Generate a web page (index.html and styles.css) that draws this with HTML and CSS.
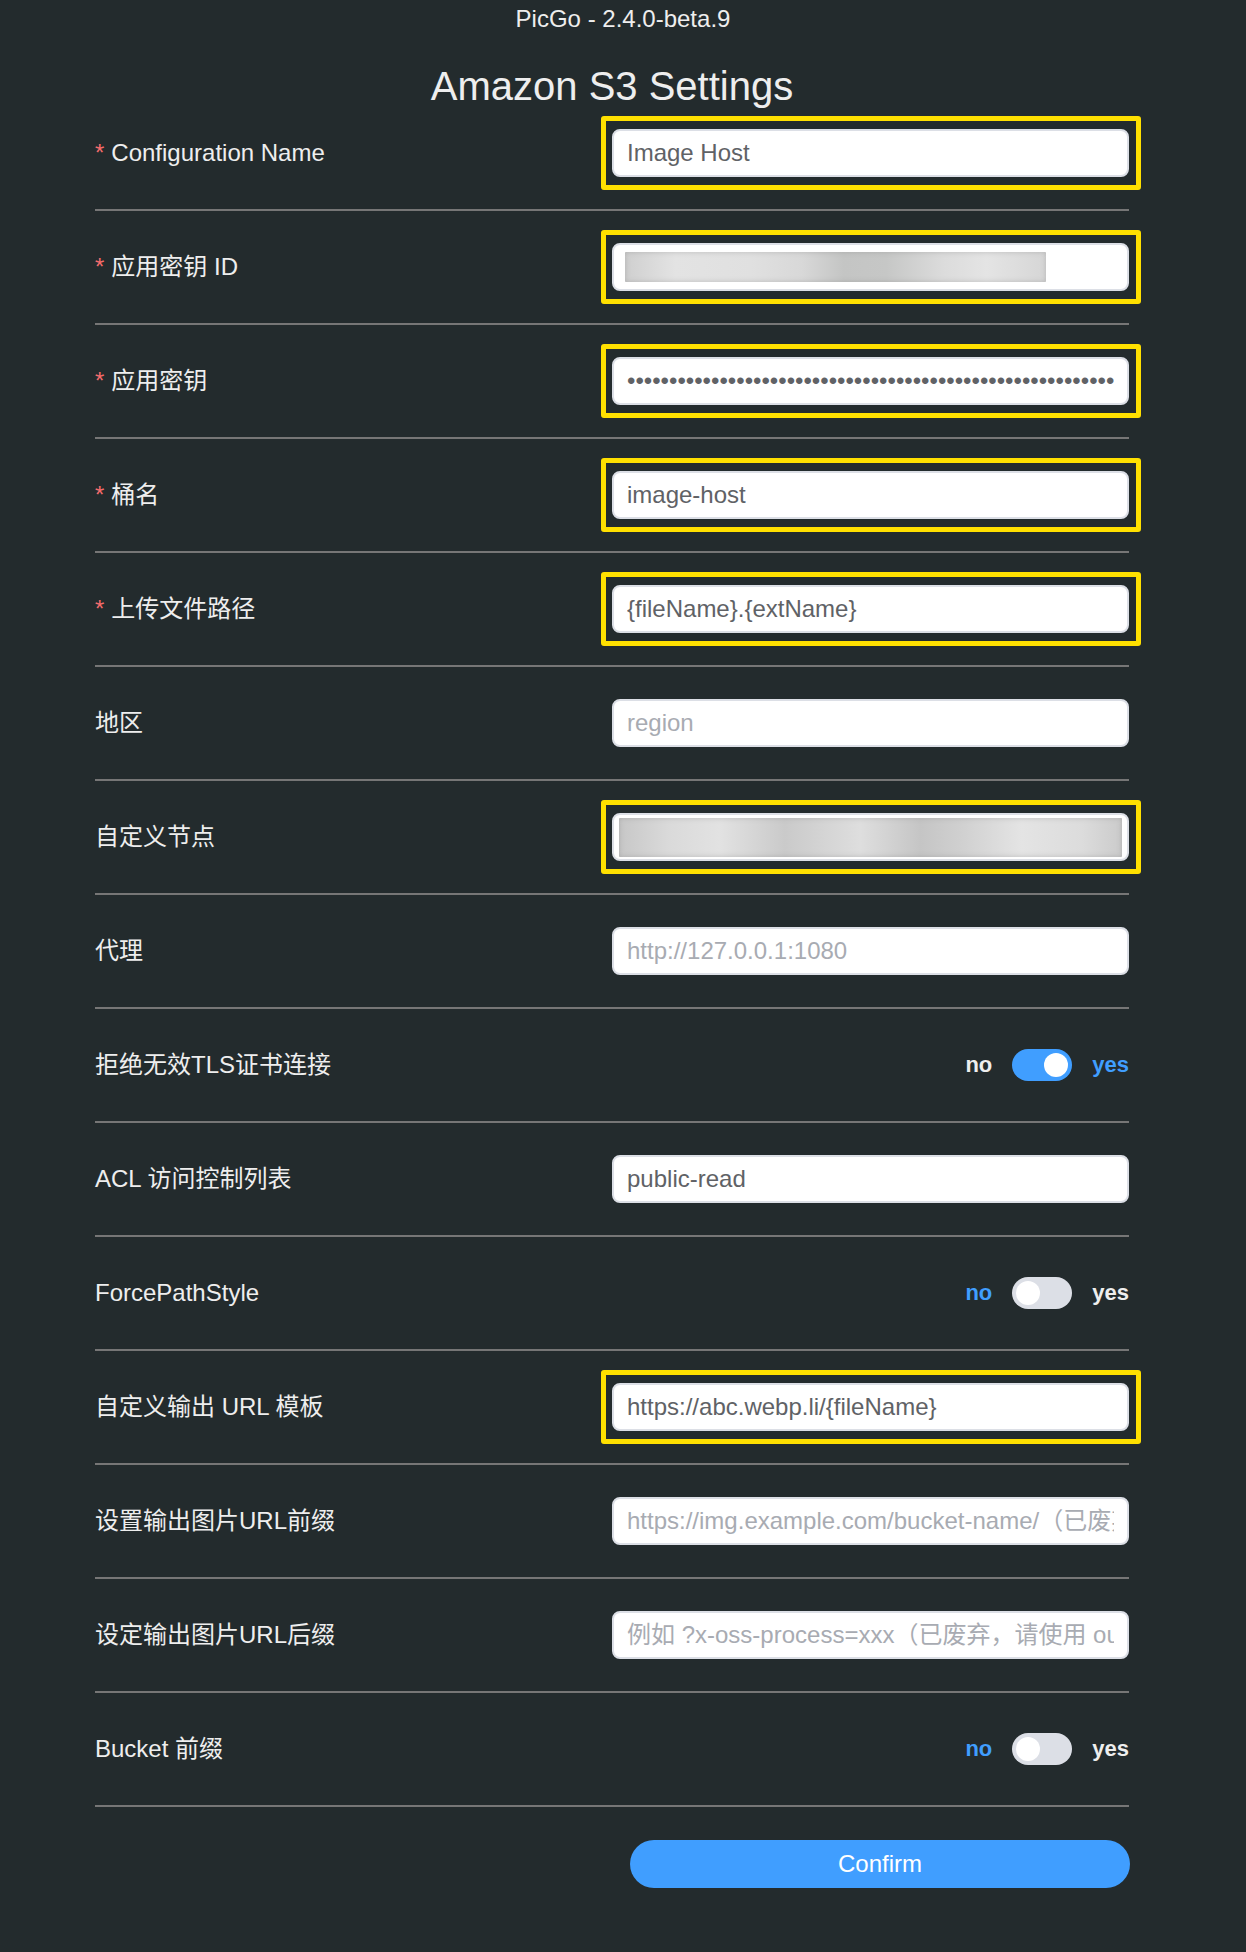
FILE: index.html
```html
<!DOCTYPE html>
<html lang="zh-CN">
<head>
<meta charset="utf-8">
<title>PicGo - Amazon S3 Settings</title>
<link rel="stylesheet" href="styles.css">
</head>
<body>
<div class="titlebar">PicGo - 2.4.0-beta.9</div>
<main class="main">
  <h1 class="page-title">Amazon S3 Settings</h1>
  <form class="form">
    <div class="row">
      <label class="label required">Configuration Name</label>
      <div class="control"><div class="mark"><input class="input" type="text" value="Image Host"></div></div>
    </div>
    <div class="row">
      <label class="label required">应用密钥 ID</label>
      <div class="control"><div class="mark"><div class="input redacted-field"><span class="redact redact-short"></span></div></div></div>
    </div>
    <div class="row">
      <label class="label required">应用密钥</label>
      <div class="control"><div class="mark"><input class="input" type="password" value="xxxxxxxxxxxxxxxxxxxxxxxxxxxxxxxxxxxxxxxxxxxxxxxxxxxxxxxxxxxxxxxxxxxxxxxxxxxxxxxxxxxxxx"></div></div>
    </div>
    <div class="row">
      <label class="label required">桶名</label>
      <div class="control"><div class="mark"><input class="input" type="text" value="image-host"></div></div>
    </div>
    <div class="row">
      <label class="label required">上传文件路径</label>
      <div class="control"><div class="mark"><input class="input" type="text" value="{fileName}.{extName}"></div></div>
    </div>
    <div class="row">
      <label class="label">地区</label>
      <div class="control"><input class="input" type="text" placeholder="region"></div>
    </div>
    <div class="row">
      <label class="label">自定义节点</label>
      <div class="control"><div class="mark"><div class="input redacted-field wide"><span class="redact redact-full"></span></div></div></div>
    </div>
    <div class="row">
      <label class="label">代理</label>
      <div class="control"><input class="input" type="text" placeholder="http://127.0.0.1:1080"></div>
    </div>
    <div class="row">
      <label class="label">拒绝无效TLS证书连接</label>
      <div class="control toggle-ctl">
        <span class="sw-label">no</span>
        <span class="switch on"><span class="knob"></span></span>
        <span class="sw-label active">yes</span>
      </div>
    </div>
    <div class="row">
      <label class="label">ACL 访问控制列表</label>
      <div class="control"><input class="input" type="text" value="public-read"></div>
    </div>
    <div class="row">
      <label class="label">ForcePathStyle</label>
      <div class="control toggle-ctl">
        <span class="sw-label active">no</span>
        <span class="switch"><span class="knob"></span></span>
        <span class="sw-label">yes</span>
      </div>
    </div>
    <div class="row">
      <label class="label">自定义输出 URL 模板</label>
      <div class="control"><div class="mark"><input class="input" type="text" value="https://abc.webp.li/{fileName}"></div></div>
    </div>
    <div class="row">
      <label class="label">设置输出图片URL前缀</label>
      <div class="control"><input class="input" type="text" placeholder="https://img.example.com/bucket-name/（已废弃，请使用 outputURLPattern）"></div>
    </div>
    <div class="row">
      <label class="label">设定输出图片URL后缀</label>
      <div class="control"><input class="input" type="text" placeholder="例如 ?x-oss-process=xxx（已废弃，请使用 outputURLPattern）"></div>
    </div>
    <div class="row">
      <label class="label">Bucket 前缀</label>
      <div class="control toggle-ctl">
        <span class="sw-label active">no</span>
        <span class="switch"><span class="knob"></span></span>
        <span class="sw-label">yes</span>
      </div>
    </div>
    <div class="actions">
      <button type="button" class="btn">Confirm</button>
    </div>
  </form>
</main>
</body>
</html>
```
FILE: styles.css
```css
html {
  background: #232b2d;
}
body {
  margin: 0;
  min-height: 1952px;
  background: #232b2d;
  color: #eeeeee;
  font-family: "Liberation Sans", Arial, "Noto Sans CJK SC", sans-serif;
}

.titlebar {
  padding-top: 4px;
  font-size: 24px;
  line-height: 30px;
  text-align: center;
  color: #eeeeee;
}

.main {
  margin-left: 95px;
  width: 1034px;
}

.page-title {
  margin: 32px 0 0;
  height: 31px;
  font-size: 40px;
  font-weight: 400;
  line-height: 40px;
  text-align: center;
  color: #eeeeee;
}

.form {
  margin: 0;
}

.row {
  display: flex;
  align-items: center;
  height: 114px;
  box-sizing: border-box;
  border-bottom: 2px solid #767676;
}

.label {
  flex: 0 0 517px;
  font-size: 24px;
  line-height: 1.2;
  color: #eeeeee;
}

.required::before {
  content: "*";
  color: #f56c6c;
  margin-right: 7px;
}

.control {
  flex: 0 0 517px;
  min-width: 0;
}

.mark {
  position: relative;
}

.mark::after {
  content: "";
  position: absolute;
  top: -13px;
  bottom: -13px;
  left: -11px;
  right: -12px;
  border: 5px solid #ffe000;
  border-radius: 3px;
  pointer-events: none;
}

.input {
  display: block;
  width: 100%;
  height: 48px;
  box-sizing: border-box;
  margin: 0;
  padding: 0 13px;
  border: 2px solid #dcdfe6;
  border-radius: 8px;
  background: #ffffff;
  color: #606266;
  font-family: "Liberation Sans", Arial, "Noto Sans CJK SC", sans-serif;
  font-size: 24px;
  outline: none;
}

.input::placeholder {
  color: #a8abb2;
  opacity: 1;
}

.redacted-field {
  display: flex;
  align-items: center;
  padding: 0 11px;
}

.redacted-field.wide {
  padding: 0 5px;
}

.redact {
  display: block;
  border-radius: 1px;
  box-shadow: inset 0 0 5px rgba(120, 120, 120, 0.35);
}

.redact-short {
  width: 421px;
  height: 30px;
  background: linear-gradient(90deg, #cfcfcf 0%, #e3e3e3 12%, #e0e0e0 30%, #d8d8d8 42%, #c4c5c4 52%, #c6c7c6 62%, #dcdcdc 76%, #e4e4e4 86%, #d6d6d6 100%);
}

.redact-full {
  width: 100%;
  height: 39px;
  background: linear-gradient(90deg, #c7c7c7 0%, #dadada 10%, #e2e2e2 20%, #cacaca 33%, #dedede 48%, #c5c5c5 60%, #d0d0d0 68%, #e4e4e4 80%, #dcdcdc 92%, #cbcbcb 100%);
}

.toggle-ctl {
  display: flex;
  justify-content: flex-end;
  align-items: center;
  gap: 20px;
}

.sw-label {
  font-size: 22px;
  font-weight: 700;
  line-height: 1;
  color: #eeeeee;
}

.sw-label.active {
  color: #409eff;
}

.switch {
  display: flex;
  align-items: center;
  width: 60px;
  height: 32px;
  box-sizing: border-box;
  padding: 0 4px;
  border-radius: 16px;
  background: #dcdfe6;
}

.switch.on {
  justify-content: flex-end;
  background: #409eff;
}

.knob {
  width: 24px;
  height: 24px;
  border-radius: 50%;
  background: #ffffff;
}

.actions {
  display: flex;
  justify-content: flex-end;
  margin-top: 33px;
  margin-right: -1px;
}

.btn {
  width: 500px;
  height: 48px;
  border: 0;
  border-radius: 24px;
  background: #409eff;
  color: #ffffff;
  font-family: "Liberation Sans", Arial, sans-serif;
  font-size: 24px;
  cursor: pointer;
}
```
